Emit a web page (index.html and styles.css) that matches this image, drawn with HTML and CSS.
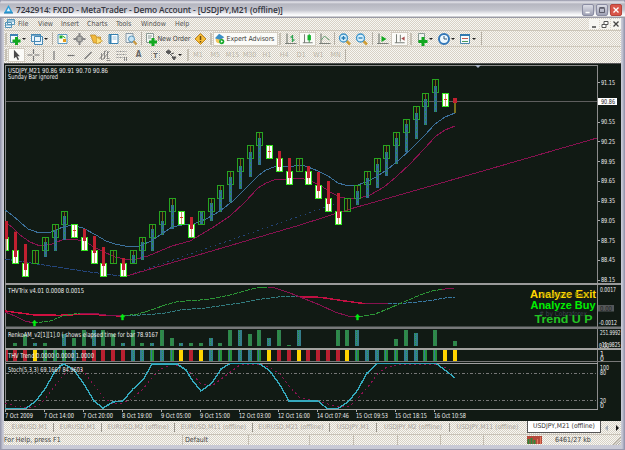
FILE: index.html
```
<!DOCTYPE html>
<html lang="en">
	<head>
		<meta charset="UTF-8" />
		<title>7242914: FXDD - MetaTrader - Demo Account</title>
		<link rel="stylesheet" href="styles.css">
	</head>
	<body>
		<div class="window">
			<header class="titlebar">
				<svg class="logo" viewBox="0 0 10 10"><path d="M5 0 10 9H0z" fill="#2e9fd8" /><path d="M5 3 7 7H3z" fill="#e8f6ff" /><path d="M0 9h10" stroke="#1677b0" /></svg>
				<h1>7242914: FXDD - MetaTrader - Demo Account - [USDJPY,M21 (offline)]</h1>
				<div class="win-buttons">
					<svg viewBox="0 0 12 12"><path d="M3 9h5" stroke="#fff" stroke-width="2" /></svg>
					<svg viewBox="0 0 12 12"><path d="M3 4h6v5H3zM3 3h6" fill="none" stroke="#4c4c5a" /></svg>
					<svg class="close" viewBox="0 0 12 12"><path d="M3 3 9 9M9 3 3 9" stroke="#fff" stroke-width="1.6" /></svg>
				</div>
			</header>

			<nav class="menu">
				<svg class="doc-icon" viewBox="0 0 10 10"><path d="M2.500.5h7v5h-7zM.5 3.500h6v5h-6z" fill="#eaf5fc" stroke="#5594b8" /><path d="M1 6h5M3 2h6" stroke="#5594b8" /></svg>
				<span style="width: 20px">File</span>
				<span style="width: 23px">View</span>
				<span style="width: 26px">Insert</span>
				<span style="width: 29px">Charts</span>
				<span style="width: 25px">Tools</span>
				<span style="width: 34px">Window</span>
				<span>Help</span>
				<div class="child-buttons">
					<svg viewBox="0 0 10 10"><path d="M3 8h4" stroke="#444" stroke-width="1.500" /></svg>
					<svg viewBox="0 0 10 10"><path d="M4 2.500h4v3H4zM2 5.500h4v3H2z" fill="#fff" stroke="#555" /></svg>
					<svg viewBox="0 0 10 10"><path d="M2.500 2.500 7.500 7.500M7.500 2.500 2.500 7.500" stroke="#444" stroke-width="1.300" /></svg>
				</div>
			</nav>

			<div class="toolbar">
				<i class="grip"></i>
				<div class="drop">
					<svg viewBox="0 0 14 14"><path d="M2.500 2.500h7v8h-7z" fill="#f4fafd" stroke="#5d8fae" /><path d="M2 3h8" stroke="#3d83b5" stroke-width="2" /><path d="M8.500 5v8M4.500 9h8" stroke="#12a820" stroke-width="3" /></svg>
				</div>
				<div class="drop">
					<svg viewBox="0 0 14 14"><path d="M4.500 4.500h8v8h-8zM1.500 2.500h9v7h-9z" fill="#eaf5fc" stroke="#4688b4" /><path d="M1 3h10" stroke="#4688b4" stroke-width="1.500" /></svg>
				</div>
				<i class="sep"></i>
				<svg class="tool" viewBox="0 0 14 14"><path d="M2.500 2.500h9v9h-9z" fill="#fffdf0" stroke="#5c9ac4" /><path d="M4 3.500h3v3H4z" fill="#18a82c" /><path d="M7.500 7h3v3h-3z" fill="#e59b18" /><path d="M7 4 10 6" stroke="#18a82c" /></svg>
				<svg class="tool" viewBox="0 0 14 14"><circle cx="7" cy="7" r="3" fill="#b5b5b0" stroke="#8f8f8f" stroke-width="1.500" /><path d="M7 1v4M7 9v4M1 7h4M9 7h4" stroke="#858585" stroke-width="2" /></svg>
				<svg class="tool" viewBox="0 0 14 14"><path d="M1 3h5l1 2h4v6H4z" fill="#f2b93c" stroke="#b88524" stroke-width=".7" /><path d="M7 5 13 9 7 12z" fill="#ffe37a" stroke="#c3932d" stroke-width=".6" /></svg>
				<svg class="tool" viewBox="0 0 14 14"><path d="M2.500 2.500h9v9h-9z" fill="#fff" stroke="#3580b0" /><path d="M4 2v10" stroke="#3580b0" stroke-width="2" /><path d="M6 5h4M6 7h4" stroke="#9cc4dc" /></svg>
				<svg class="tool" viewBox="0 0 14 14"><path d="M2.500 1.500h7v9h-7z" fill="#e8f0f4" stroke="#8a9aa6" /><circle cx="8" cy="7" r="3" fill="#c4e4f6" stroke="#5a94b8" /><path d="M10 9 13 12.500" stroke="#c8963c" stroke-width="2" /></svg>
				<i class="sep wide"></i>
				<div class="order">
					<svg viewBox="0 0 14 14"><path d="M2.500 1.500h7v9h-7z" fill="#f4f6f4" stroke="#8a9a94" /><path d="M4 4h4M4 6h3" stroke="#8a9a94" /><path d="M9 6v8M5 10h8" stroke="#12a820" stroke-width="3" /></svg>
					<span>New Order</span>
				</div>
				<svg class="tool" viewBox="0 0 14 14"><path d="M7 1.500 12.500 7 7 12.500 1.500 7z" fill="#f5bd38" stroke="#bd8420" /><path d="M7 4v4M7 9v1.500" stroke="#6b4a10" stroke-width="1.500" /></svg>
				<i class="grip"></i>
				<div class="advisors">
					<svg viewBox="0 0 14 14"><circle cx="6" cy="8" r="4" fill="#f1c55c" /><path d="M1 6 6 1 12 5 7 8z" fill="#3b8fc6" /><circle cx="9" cy="10" r="3" fill="#18aa2c" /><path d="M8 8.500v3L10.500 10z" fill="#fff" /></svg>
					<span>Expert Advisors</span>
				</div>
				<i class="grip wide"></i>
				<svg class="tool" viewBox="0 0 14 14"><path d="M3.500 1.500v10H13M1.500 11.500h2" fill="none" stroke="#7b8079" stroke-width="1.200" /><path d="M9 3v7M7 5h2M9 8h2" stroke="#30a654" stroke-width="1.300" /></svg>
				<svg class="tool on" viewBox="0 0 14 14"><path d="M3.500 1.500v10H13M1.500 11.500h2" fill="none" stroke="#7b8079" stroke-width="1.200" /><path d="M9 1v10" stroke="#178a2b" /><path d="M7 2.500h4v6H7z" fill="#12b52b" /></svg>
				<svg class="tool" viewBox="0 0 14 14"><path d="M3.500 1.500v10H13M1.500 11.500h2" fill="none" stroke="#7b8079" stroke-width="1.200" /><path d="M4 8Q7 2 9 6L12 8" fill="none" stroke="#5f9a6c" /></svg>
				<i class="sep"></i>
				<svg class="tool" viewBox="0 0 14 14"><path d="M8 8 12.500 12.500" stroke="#cf9c34" stroke-width="2.500" /><circle cx="6" cy="6" r="4" fill="#d4effc" stroke="#3f94c8" stroke-width="1.300" /><path d="M6 4v4M4 6h4" stroke="#247cb4" stroke-width="1.300" /></svg>
				<svg class="tool" viewBox="0 0 14 14"><path d="M8 8 12.500 12.500" stroke="#cf9c34" stroke-width="2.500" /><circle cx="6" cy="6" r="4" fill="#d4effc" stroke="#3f94c8" stroke-width="1.300" /><path d="M4 6h4" stroke="#247cb4" stroke-width="1.300" /></svg>
				<i class="sep wide"></i>
				<svg class="tool" viewBox="0 0 14 14"><path d="M3.500 1.500v10H13M1.500 11.500h2" fill="none" stroke="#7b8079" stroke-width="1.200" /><path d="M6 4 11 7 6 10z" fill="#12a820" /></svg>
				<svg class="tool on" viewBox="0 0 14 14"><path d="M3.500 1.500v10H13M1.500 11.500h2M8 2v8" fill="none" stroke="#7b8079" stroke-width="1.200" /><path d="M13 4 9 6.500 13 9z" fill="#a64d4d" /></svg>
				<i class="grip last"></i>
				<div class="drop">
					<svg viewBox="0 0 14 14"><path d="M3.500 1.500h6v9h-6z" fill="#eef3ee" stroke="#8a9a94" /><path d="M8 5v9M3.500 9.500h9" stroke="#12a820" stroke-width="3" /></svg>
				</div>
				<div class="drop">
					<svg viewBox="0 0 14 14"><circle cx="7" cy="7" r="5" fill="#eef9ff" stroke="#3277b8" stroke-width="2" /><path d="M7 4v3h3" fill="none" stroke="#33597a" /></svg>
				</div>
				<div class="drop">
					<svg viewBox="0 0 14 14"><path d="M2.500 2.500h9v9h-9z" fill="#f5fafd" stroke="#4b86ae" /><path d="M2 3h10" stroke="#2f79b0" stroke-width="2" /><path d="M4 6.500h6" stroke="#c45b50" /><path d="M4 9.500h6" stroke="#4b9a5c" /></svg>
				</div>
				<i class="sep"></i>
			</div>

			<div class="toolbar tools">
				<i class="grip"></i>
				<svg class="tool on" viewBox="0 0 14 14"><path d="M4 1v10l2.500-2 2 4 1.500-1-2-3.500H11z" fill="#4a4a4a" /></svg>
				<svg class="tool" viewBox="0 0 14 14"><path d="M7 1v5M7 8v5M1 7h5M8 7h5" stroke="#777" stroke-width="1.200" /></svg>
				<i class="sep"></i>
				<svg class="tool" viewBox="0 0 14 14"><path d="M7.500 3v9" stroke="#777" stroke-width="1.200" /></svg>
				<svg class="tool" viewBox="0 0 14 14"><path d="M4 7.500h7" stroke="#777" stroke-width="1.200" /></svg>
				<svg class="tool" viewBox="0 0 14 14"><path d="M4 11 11 4" stroke="#777" stroke-width="1.200" /></svg>
				<svg class="tool" viewBox="0 0 14 14"><path d="M2 11 9 2M5 12 12 3M4 5v7M7 3v8M10 3v7M9 12.500h4M9 10.500h3" stroke="#777" stroke-width=".8" /></svg>
				<svg class="tool" viewBox="0 0 14 14"><path d="M2 3.500h10M2 6.500h10M2 9.500h7" stroke="#999" stroke-dasharray="2 1" /><path d="M10 9v4M12 9v4" stroke="#888" /></svg>
				<b class="tool">A</b>
				<b class="tool boxed">T</b>
				<div class="drop">
					<svg viewBox="0 0 14 14"><path d="M2 4 4.500 2 7 4 4.500 6zM8 9h4l-2 3zM5 5l4 4M7 6l3-1" fill="#555" stroke="#555" /></svg>
				</div>
				<i class="grip wide"></i>
				<div class="periods">
					<span>M1</span><span>M5</span><span>M15</span><span>M30</span><span>H1</span><span>H4</span><span>D1</span><span>W1</span><span>MN</span>
				</div>
				<i class="sep"></i>
			</div>

			<main>
				<svg id="chart" viewBox="4 64 617 358"></svg>
			</main>

			<div class="tabs">
				<span style="width: 48px">EURUSD,M1</span>
				<span style="width: 48px">EURUSD,M1</span>
				<span style="width: 73px">EURUSD,M2 (offline)</span>
				<span style="width: 78px">EURUSD,M11 (offline)</span>
				<span style="width: 77px">EURUSD,M21 (offline)</span>
				<span style="width: 47px">USDJPY,M1</span>
				<span style="width: 73px">USDJPY,M2 (offline)</span>
				<span class="plain" style="width: 75px">USDJPY,M11 (offline)</span>
				<span class="active">USDJPY,M21 (offline)</span>
				<svg viewBox="0 0 18 8"><path d="M5 1v6L2 4z" fill="#a3abb5" /><path d="M13 1v6l3-3z" fill="#111" /></svg>
			</div>

			<footer class="status">
				<span style="width: 179px">For Help, press F1</span>
				<span style="width: 66px">Default</span>
				<span style="width: 61px"></span>
				<span style="width: 44px"></span>
				<span style="width: 44px"></span>
				<span style="width: 43px"></span>
				<span style="width: 43px"></span>
				<span class="traffic">
					<svg viewBox="0 0 15 8"><path d="M0 0h15v8H0z" fill="#b54a3c" /><path d="M1.500 3v5M4.500 2v6M7.500 4v4" stroke="#2f8a3a" stroke-width="2" /><path d="M10.500 3v5M13.500 1v7" stroke="#e07a5c" /></svg>
					6461/27 kb
				</span>
				<svg class="resize" viewBox="0 0 10 10"><path d="M1 10 10 1M4 10 10 4M7 10 10 7" stroke="#9a968c" /></svg>
			</footer>
		</div>
		<script src="chart.js"></script>
	</body>
</html>
```

FILE: styles.css
```
* {
	box-sizing: border-box;
}
body {
	margin: 0;
	font-family: "DejaVu Sans Condensed", "DejaVu Sans", sans-serif;
	font-size: 7px;
	color: #3c3c3c;
}
svg {
	display: block;
	flex: none;
}
.window {
	width: 625px;
	height: 450px;
	display: flex;
	flex-direction: column;
	overflow: hidden;
	padding: 0 4px 4px;
	background: linear-gradient(90deg, #8d90a6, #c9cad6 3px, #c9cad6 622px, #8b8ea8);
	border-bottom: 1px solid #9a9bae;
}
.titlebar {
	height: 18px;
	margin: 0 -4px;
	padding: 2px 3px 0 4px;
	display: flex;
	align-items: center;
	border-radius: 4px 4px 0 0;
	background: linear-gradient(#8f91a4, #e4e4ea 2px, #b5b6c0 4px, #c4c5ce 10px, #f3f3f6 14px, #fff 16px, #9b9ba5 17px);
}
.titlebar .logo {
	width: 9px;
	height: 9px;
	margin-right: 3px;
}
.titlebar h1 {
	margin: 0;
	font: 600 8.400px "Open Sans", sans-serif;
	letter-spacing: -.14px;
	color: #35363f;
	white-space: nowrap;
}
.win-buttons {
	display: flex;
	gap: 2px;
	margin-left: auto;
}
.win-buttons svg {
	width: 12px;
	height: 12px;
	border: 1px solid #8b8da3;
	border-radius: 2px;
	background: linear-gradient(#dcdde6, #9fa1b4);
}
.win-buttons .close {
	border-color: #b5453c;
	background: #d9564a;
}
.menu,
.toolbar,
.tabs,
.status {
	display: flex;
	align-items: center;
	white-space: nowrap;
	background: repeating-conic-gradient(#d8d1c5 0 25%, #f7f7f3 0 50%) 0 0 / 2px 2px;
}
.menu {
	height: 13px;
	color: #555;
	border-bottom: 1px solid #cbc5b8;
}
.doc-icon {
	width: 10px;
	height: 10px;
	margin: 0 3px 0 1px;
}
.child-buttons {
	display: flex;
	gap: 1px;
	margin-left: auto;
}
.child-buttons svg {
	width: 10px;
	height: 10px;
	background: #f6f5f1;
}
.toolbar {
	height: 17px;
	border-bottom: 1px solid #cfc9bd;
}
.toolbar.tools {
	height: 16px;
	border-bottom: 0;
}
.grip {
	flex: none;
	width: 2px;
	height: 12px;
	margin: 0 1px;
	background: #c6c1b5;
}
.grip.wide {
	margin: 0 1px;
}
.grip.last {
	margin: 0 3px 0 2px;
}
.sep {
	flex: none;
	width: 1px;
	height: 13px;
	margin: 0 1px;
	background: #b5b0a6;
}
.sep.wide {
	margin: 0 1.500px 0 2px;
}
.tool {
	width: 17px;
	height: 14px;
	text-align: center;
	color: #666;
	font-size: 8px;
	line-height: 14px;
}
.tool.on {
	background: #fbfbf8;
	border: 1px solid #d2ccc1;
}
.tool.boxed {
	width: 9px;
	height: 9px;
	margin: 0 4px;
	font-size: 7px;
	line-height: 8px;
	border: 1px dotted #999;
}
.drop {
	display: flex;
	align-items: center;
	width: 21.500px;
	flex: none;
}
.drop svg {
	width: 14px;
	height: 14px;
}
.drop::after {
	content: "";
	border: 2px solid transparent;
	border-top-color: #222;
	margin-top: 2px;
}
.order {
	display: flex;
	align-items: center;
	width: 48px;
	color: #444;
	letter-spacing: -.1px;
}
.order svg {
	width: 14px;
	height: 14px;
}
.advisors {
	display: flex;
	align-items: center;
	width: 65px;
	height: 14px;
	background: #fbfbf8;
	border: 1px solid #d2ccc1;
	letter-spacing: -.1px;
}
.advisors svg {
	width: 12px;
	height: 12px;
	margin-right: 1px;
}
.periods {
	display: flex;
	color: #bdb7aa;
}
.periods span {
	width: 17.200px;
	text-align: center;
}
main {
	height: 358px;
}
#chart {
	width: 617px;
	height: 358px;
	background: #111a14;
}
#chart polyline {
	shape-rendering: crispEdges;
}
#chart text {
	fill: #ececec;
	font-size: 6.800px;
}
#chart .signal {
	font: bold 11px "Liberation Sans", sans-serif;
}
#chart .yellow {
	fill: #ffd800;
}
#chart .lime {
	fill: #00f000;
}
#chart .green {
	fill: #22c422;
}
#chart .ghost {
	fill: #8a7a08;
}
#chart .dim {
	fill: #3c4450;
}
#chart .price {
	fill: #222;
}
.tabs {
	height: 13px;
	color: #aaa59b;
}
.tabs span {
	text-align: center;
	flex: none;
	font-size: 6.700px;
	line-height: 9px;
	border-right: 1px solid #98948b;
}
.tabs span:first-child {
	margin-left: 2px;
}
.tabs .plain {
	border-right: 0;
}
.tabs .active {
	width: 74px;
	height: 12px;
	line-height: 11px;
	align-self: flex-start;
	margin-left: 2px;
	background: #fff;
	color: #333;
	border: 1px solid #555;
	border-top: 0;
}
.tabs svg {
	width: 18px;
	height: 8px;
	margin-left: auto;
}
.status {
	height: 12px;
	flex: 1;
	color: #444;
	border-top: 1px solid #c8c2b7;
}
.status > span {
	height: 10px;
	line-height: 10px;
	flex: none;
	border-right: 1px solid #c3bdb1;
}
.status > span + span {
	padding-left: 2px;
}
.status .traffic {
	display: flex;
	align-items: center;
	gap: 13px;
	width: 118px;
	padding-left: 43px;
	border-right: 0;
}
.traffic svg {
	width: 15px;
	height: 8px;
}
.resize {
	width: 9px;
	height: 9px;
	margin-left: auto;
}
```

FILE: chart.js
```
const chart = document.getElementById('chart');
const NS = 'http://www.w3.org/2000/svg';
const STEP = 9.76;
const barX = (i) => 5.7 + i * STEP;

function add(tag, attrs, content) {
	const el = document.createElementNS(NS, tag);
	for (const key in attrs) el.setAttribute(key, attrs[key]);
	if (content) el.textContent = content;
	chart.appendChild(el);
}
function rect(x, y, width, height, fill, stroke) {
	add('rect', { x, y, width, height, fill, stroke: stroke || 'none' });
}
function line(points, stroke, dash, width) {
	add('polyline', {
		points,
		stroke,
		fill: 'none',
		'stroke-width': width || 1,
		'stroke-dasharray': dash || 'none',
	});
}
function label(x, y, content, width, cls) {
	const attrs = { x, y, class: cls || '' };
	if (width) {
		attrs.textLength = width;
		attrs.lengthAdjust = 'spacingAndGlyphs';
	}
	add('text', attrs, content);
}

// panel frames
line('5.5,284 5.5,66.5 597.5,66.5 597.5,411', '#8c8c8c');
line('5.5,284 5.5,411', '#8c8c8c');
line('4,64.5 621,64.5', '#555');
rect(5, 284, 616, 2, '#9a9a9a');
rect(5, 327.5, 616, 2.5, '#77797a');
rect(5, 349, 616, 2, '#a2a2a0');
rect(5, 362, 616, 1, '#777');
rect(5, 364, 593, 1, '#a0a0a0');
line('5,410.5 598,410.5', '#a0a0a0');
add('path', { d: 'M475 66h6l-3 3z', fill: '#aab4c8' });
rect(6, 102, 591, 1, '#5e5e5e');

// moving averages and trend lines
line('5,223 12,228 20,236 30,243 40,247 52,245 62,241 72,240 84,242 94,248 104,253 115,258 125,260 135,260.5 148,257 160,252 172,247 190,242 212,229 230,217 245,203 258,189 266,184 274,181 290,180.5 300,179 308,181 320,186 330,193 340,198 350,200 360,199 370,196 384,188 396,178 410,165 424,150 436,137 445,131 455,127', '#8a1250');
line('5,211 12,216 20,223 28,230 38,233.5 50,233.5 56,231 64,227.5 72,226.5 83,229 96,236 106,242 115,245 127,247.5 140,247 152,241.5 160,236 172,228 182,226 194,225 206,220 220,212 234,201 248,187 258,177 266,171 274,168 290,167.5 302,166 308,168 318,172 328,177 338,184 345,186 355,187 366,183 376,178 388,170 400,160 412,149 424,137 435,125 445,118 455,114', '#3c719c');
line('5,260 50,267 90,273 125,277.5', '#24467c', '5 1');
line('125,277.5 300,217 340,203', '#24467c', '1.5 3.5');
line('125,277.5 300,226 350,210 410,193 597,139', '#86124f');

// [row, direction, inner top, inner bottom]
const candles = [
	[2, 'd', 222, 240], [1, 'd', 232.7, 258], [0, 'd', 245, 271], [1, 'n'],
	[2, 'u', 243, 258], [3, 'u', 231, 252], [4, 'u', 217, 241], [3, 'w'],
	[2, 'd', 230, 242], [1, 'd', 237, 254], [0, 'd', 248, 267], [1, 'n'],
	[0, 'd', 259, 271], [1, 'u', 256, 264], [2, 'u', 243, 261], [3, 'u', 230, 252],
	[4, 'u', 222, 236], [5, 'u', 206, 230], [4, 'w'], [3, 'd', 218, 230],
	[4, 'u', 213, 225], [5, 'u', 204, 222], [6, 'u', 191, 213], [7, 'u', 178, 203],
	[8, 'u', 167, 190], [9, 'u', 153, 178], [10, 'u', 139, 166], [9, 'w'],
	[8, 'd', 152, 168], [7, 'd', 159, 179], [8, 'n'], [7, 'd', 167, 179],
	[6, 'd', 173, 192], [5, 'd', 182, 205], [4, 'd', 194, 219], [5, 'n'],
	[6, 'u', 192, 206], [7, 'u', 179, 199], [8, 'u', 165, 189], [9, 'u', 153, 177],
	[10, 'u', 139, 165], [11, 'u', 125, 153], [12, 'u', 114, 140], [13, 'u', 100, 126],
	[14, 'u', 87, 113], [13, 'w'],
];
candles.forEach(([row, dir, top, bottom], i) => {
	const x = Math.round(barX(i));
	const y = Math.round(264.3 - 13.13 * row);
	const down = dir === 'd' || dir === 'w';
	const left = i === 0 ? 6 : x - 3;
	rect(left + .5, y + .5, i === 0 ? 2 : 6, 13, down ? '#fff' : 'none', down ? '#35e820' : '#26a51f');
	rect(x, y + 1, 1, 12, down ? '#c5a260' : '#725d12');
	if (dir === 'd') rect(x - 1, top, 3, bottom - top, '#c02030');
	if (dir === 'w') rect(x - 1, y + 6, 3, 1, '#d83b28');
	if (dir === 'u') {
		rect(x - 1, top, 3, bottom - top, '#326f94');
		line(`${x + .5},${top} ${x + .5},${bottom}`, '#28943c', '2 2');
	}
});
rect(454, 99, 2, 15, '#77701a');
rect(453, 99, 4, 5, '#c02030');

// trix
line('5,312 20,314 35,316 60,316.3 90,315 105,316.3 122,317', '#d01040', '', 1.5);
line('122,317 150,315.5 165,314 180,311 205,309 240,304 262,300 280,297.7 300,297.7', '#327d80', '4 1');
line('300,297.7 315,298 325,299 345,302 365,304.7', '#c01042', '', 1.5);
line('365,304.7 388,304.7', '#86124f', '', 1.5);
line('388,304.7 400,304.5 415,303.3 434,301 445,299 455,298', '#3878a0', '4 1');
line('5,313 15,317 25,322 34,324', '#86124f');
line('34,324 50,322 64,316.5 80,314', '#2c9636', '4 1');
line('80,314 95,314.500 110,316.5 122,317', '#86124f');
line('122,317 138,315 150,311.5 165,306 178,302.5 195,301.5 210,300 230,296 250,290.5 262,288 268,288.3', '#2c9636', '5 1');
line('268,288.3 275,289 290,294 305,300 320,306 335,313 348,317 358,318', '#86124f');
line('358,318 375,315 390,309 405,302.5 420,296 434,291.5 442,290.5', '#2c9636', '5 1');
line('442,290.5 448,289.5 454,290', '#86124f');
[[34, 324], [122, 318], [357, 318]].forEach(([x, y]) => {
	add('path', { d: `M${x + .5} ${y - 3}l2.5 3h-1.5v3h-2v-3h-1.5z`, fill: '#00ee10', stroke: '#00ee10', 'stroke-width': .4 });
});

// elapsed time bars, 0 where no bar is drawn
const tops = [0, 344, 335, 344, 344, 0, 335, 339, 331, 331, 331, 335, 344, 331, 344, 344,
	331, 339, 344, 344, 344, 339, 344, 331, 331, 335, 331, 339, 331, 346, 331, 0,
	0, 0, 331, 331, 331, 0, 0, 0, 340, 331, 334, 0, 331, 0, 342];
const trend = 'rrrygggbrrrrrbbgbgyrybggbbgyrryrrrrygbbggbbggyy';
const fills = { r: '#b82030', y: '#ffd400', g: '#26913a', b: '#347c95' };
tops.forEach((y, i) => {
	const x = Math.round(barX(i)) - 2;
	if (y) {
		rect(x, y, 4, 347 - y, i % 3 ? '#31834f' : '#347c8a');
		line(`${x + 1.5},${y} ${x + 1.5},347`, '#249c38', '1 1');
	}
	rect(i ? x : 6, 351, i ? 4 : 2, 11, fills[trend[i]]);
	if (trend[i] === 'g') rect(x + 1, 351, 1, 11, '#37759a');
	if (trend[i] === 'b') line(`${x + 2.5},351 ${x + 2.5},362`, '#27a04a', '1 1');
});

// stochastic
line('6,374.5 597,374.5', '#777', '3 2 1 2');
line('6,401.5 597,401.5', '#777', '3 2 1 2');
line('5,404 15,407 26,409 38,407 46,399 54,388 62,378 70,370 78,368 84,373 94,386 104,399 113,405 123,404 133,399 143,390 152,379 160,370 172,365.5 180,367 192,375 201,385 212,387 221,380 232,372 240,366 262,365.5 270,369 280,375 290,388 300,399 315,402 328,405 338,408 350,407 358,399 368,388 378,374 387,368 400,365.5 436,365.5 452,371', '#8a1250', '2 3');
line('5,409.5 26,409.5 36,402 45,390 54,374 60,367 64,365 74,371 84,385 94,402 103,409 113,403 123,402 133,390 143,381 152,365 177,365 186,371 192,381 201,392 212,384 221,370 230,364.5 259,364.5 270,372 280,386 289,402 318,402 327,409.5 338,409.5 348,403 357,392 367,374 377,364.5 436,364.5 445,371 455,379', '#35a9bd', '', 1.4);

// captions
label(8, 73.5, 'USDJPY,M21  90.86 90.91 90.70 90.86', 100);
label(8, 80, 'Sunday Bar ignored', 50);
label(8, 294, 'THVTrix v4.01 0.0008 0.0015', 76);
label(8, 337.5, 'RenkoAM_v2[1][1].0  ( shows elapsed time for bar 78.9167', 150);
label(8, 358.5, 'THV Trend 0.0000 0.0000 1.0000', 86);
label(8, 373, 'Stoch(5,3,3) 69.1667 84.9603', 75);

const prices = ['91.15', '', '90.55', '90.25', '89.95', '89.65', '89.35', '89.05', '88.75', '88.45', '88.15'];
prices.forEach((price, i) => {
	const y = 83 + i * 19.75;
	if (!price) return;
	rect(598, Math.round(y), 2, 1, '#aaa');
	label(601, y + 2.5, price, 14);
});
rect(598, 99, 19, 7, '#fff');
label(601, 105, '90.86', 14, 'price');
rect(598, 306, 16, 6.5, '#55585a');
label(600, 311.5, '0.00', 12, 'price');
label(600, 292.5, '0.0017', 16);
label(599, 326, '-0.0012', 18);
label(600, 335.5, '251.9992', 20.5);
label(600, 347.500, '-11.9825', 20.5);
label(599, 348.500, '0.00', 10);
label(600, 357, '1');
label(600, 361.5, '0');
label(600, 371, '100', 9);
label(600, 376, '80', 6);
label(600, 403.5, '20', 6);
label(600, 409, '0');

const times = ['7 Oct 2009', '7 Oct 14:00', '7 Oct 20:00', '8 Oct 19:00', '9 Oct 05:00', '9 Oct 15:00',
	'12 Oct 03:00', '12 Oct 16:00', '14 Oct 07:46', '15 Oct 09:53', '15 Oct 18:15', '16 Oct 10:58'];
times.forEach((time, i) => {
	const x = Math.round(5 + i * 39.04);
	line(`${x + .5},411 ${x + .5},413`, '#aaa');
	label(x, 418.5, time, i === 0 ? 28 : i < 6 ? 30 : 32);
});

// signals
label(530, 299, 'Analyze Exit', 66, 'signal yellow');
label(541, 298, 'Analyze Exit', 48, 'ghost');
label(539, 317, '# by Cobraforex', 48, 'dim');
label(530.5, 310, 'Analyze Buy', 65, 'signal lime');
label(534.5, 323.5, 'Trend  U P', 58, 'signal green');
```
